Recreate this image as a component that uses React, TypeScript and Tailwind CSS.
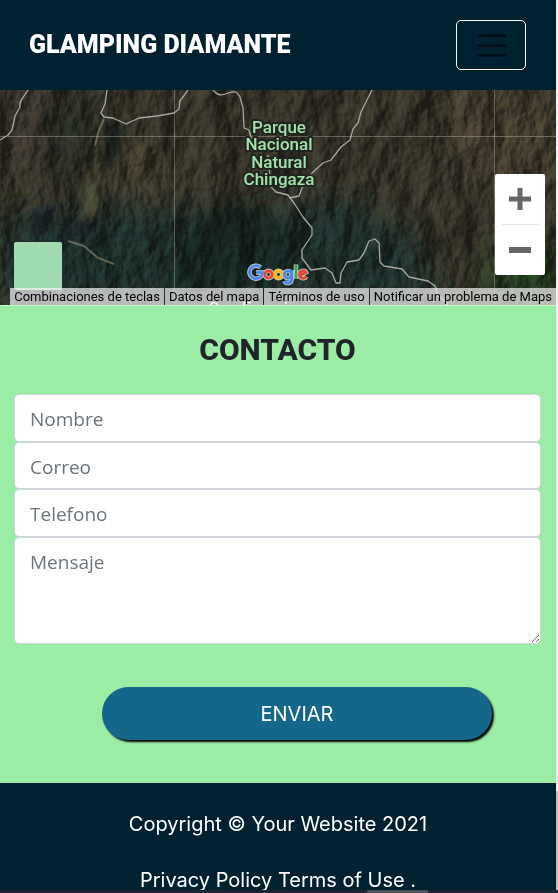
import type { ReactNode } from "react";

function SatelliteImagery() {
  return (
    <svg
      className="absolute inset-0 h-full w-full"
      viewBox="0 0 556 215"
      preserveAspectRatio="xMidYMid slice"
      aria-hidden="true"
    >
      <defs>
        <filter id="soft" x="-30%" y="-30%" width="160%" height="160%">
          <feGaussianBlur stdDeviation="14" />
        </filter>
        <filter id="edge" x="-20%" y="-20%" width="140%" height="140%">
          <feGaussianBlur stdDeviation="4" />
        </filter>
        <filter id="terrain" x="0" y="0" width="100%" height="100%" colorInterpolationFilters="sRGB">
          <feTurbulence type="fractalNoise" baseFrequency="0.03 0.02" numOctaves="5" seed="11" result="n" />
          <feDiffuseLighting in="n" surfaceScale="9" diffuseConstant="1" lightingColor="#ffffff">
            <feDistantLight azimuth="205" elevation="30" />
          </feDiffuseLighting>
        </filter>
      </defs>
      <rect width="556" height="215" fill="#333126" />
      <g filter="url(#soft)">
        <path d="M0 130 L120 115 L240 125 L340 110 L420 150 L440 215 L0 215Z" fill="#1c2e29" />
        <path d="M200 140 L270 125 L300 160 L240 215 L150 215Z" fill="#172824" />
        <path d="M430 0H556V110L470 90Z" fill="#41372a" />
        <path d="M0 0H70L40 70L0 90Z" fill="#38332a" />
        <path d="M120 40L165 60L160 110L125 100Z" fill="#403b2a" />
        <path d="M40 20L100 0L90 60L50 100Z" fill="#282a22" />
        <path d="M500 150L556 160V215H480Z" fill="#213a1f" />
      </g>
      <g filter="url(#edge)">
        <path d="M92 55L100 45L98 130L84 128Z" fill="#40402e" />
        <path d="M105 30L128 38L112 80L100 75Z" fill="#1f241e" />
        <path d="M30 125L55 112L50 140L36 148Z" fill="#191d24" />
        <path d="M75 135L92 124L86 142L74 148Z" fill="#151b20" />
        <path d="M205 135L225 115L265 120L275 150L240 160L190 160Z" fill="#16241f" />
      </g>
      <rect width="556" height="215" filter="url(#terrain)" className="opacity-45 mix-blend-overlay" />
      <g fill="none" stroke="#8e8b73" strokeWidth="2" opacity=".6">
        <path d="M104 29L99 40L95 56" />
        <path d="M68 151L84 156L98 168L114 174" />
      </g>
      <g stroke="#b4b4a8" strokeOpacity=".42">
        <path d="M0 46.500H556M174.500 0V215M494.500 0V215" />
      </g>
      <g fill="none" stroke="#a8a7a4" strokeWidth="1.300" strokeLinejoin="round">
        <path d="M28 0C24 7 19 10 20 17L15 26L12 40L8 45L0 50" />
        <path d="M107 0L105 14L101 23L104 27L113 28L126 34L139 28L157 26L174 23L179 19L180 11L188 0" />
        <path d="M213 0C219 7 223 5 228 3C235 1 237 1 240 7L243 18L244 38L249 40L252 51" />
        <path d="M372 0L367 10L361 22L358 33L353 39L350 50L341 57L331 70L323 73L312 83L302 98L299 106L289 108" />
        <path d="M268 65L271 97L276 102L288 105L294 113L303 127L312 138L312 145L302 160L302 168L311 180L325 178L332 183L336 193L340 193L341 183L347 172L359 170L364 163L369 151L375 149L379 153L380 172L384 176L402 179L409 187L428 191L435 196L438 205L448 215" />
      </g>
      <g
        fill="#a3e2a9"
        stroke="#20251f"
        strokeWidth="4"
        paintOrder="stroke"
        strokeLinejoin="round"
        textAnchor="middle"
        className="font-[Roboto,sans-serif] text-[17px] font-medium"
      >
        <text x="279" y="43">Parque</text>
        <text x="279" y="60">Nacional</text>
        <text x="279" y="78">Natural</text>
        <text x="279" y="95">Chingaza</text>
      </g>
      <text x="209" y="224" fill="#ffffff" className="font-[Roboto,sans-serif] text-[17px]">
        San Francisco
      </text>
    </svg>
  );
}

function GoogleLogo() {
  return (
    <svg
      viewBox="0 0 66 26"
      className="absolute bottom-[18px] left-1/2 h-[26px] w-[66px] -translate-x-1/2"
      role="img"
      aria-label="Google"
    >
      {["halo", "color"].map((layer) => (
        <g
          key={layer}
          fill="none"
          strokeWidth={layer === "halo" ? 4.5 : 2.7}
          stroke="#c9c9c4"
          className={layer === "halo" ? "" : "[&>.b]:stroke-[#4285f4] [&>.g]:stroke-[#34a853] [&>.r]:stroke-[#ea4335] [&>.y]:stroke-[#fbbc05]"}
        >
          <path className="b" d="M15.500 6.500A6.500 6.500 0 1 0 17.500 11.500H11" />
          <circle className="r" cx="23.500" cy="13.500" r="3.700" />
          <circle className="y" cx="33.500" cy="13.500" r="3.700" />
          <circle className="b" cx="43" cy="13.500" r="3.600" />
          <path className="b" d="M46.700 9V18C46.700 23 40.500 23 39.500 20" />
          <path className="g" d="M51 3.500V18" />
          <path className="r" d="M54.500 14.500L61 11.500C59.500 8.500 54.500 9.500 54.500 13.500C54.500 17.500 59.500 18.500 61.300 15.500" />
        </g>
      ))}
    </svg>
  );
}

function Credit({ children }: { children: ReactNode }) {
  return (
    <button type="button" className="h-[17px] bg-[#f5f5f5]/70 px-1 whitespace-nowrap text-black">
      {children}
    </button>
  );
}

function MapPanel() {
  return (
    <section aria-label="Mapa" className="relative h-[215px] overflow-hidden bg-[#302f25] font-[Roboto,sans-serif]">
      <SatelliteImagery />
      <GoogleLogo />
      <button
        type="button"
        aria-label="Cambiar vista del mapa"
        className="absolute bottom-[15px] left-[14px] h-12 w-12 rounded-xs bg-[#a0dab0] shadow-[0_0_0_1px_#20282a]"
      />
      <div className="absolute right-[11px] bottom-[30px] flex w-[50px] flex-col items-center rounded-xs bg-white">
        <button type="button" aria-label="Acercar" className="grid h-[50px] w-full place-items-center">
          <svg width="22" height="22" viewBox="0 0 22 22" fill="#666666">
            <path d="M8.500 0h5v8.500H22v5h-8.500V22h-5v-8.500H0v-5h8.500z" />
          </svg>
        </button>
        <div className="h-px w-[37px] bg-[#e6e6e6]" />
        <button type="button" aria-label="Alejar" className="grid h-[50px] w-full place-items-center">
          <svg width="22" height="6" viewBox="0 0 22 6" fill="#666666">
            <path d="M0 0h22v6H0z" />
          </svg>
        </button>
      </div>
      <div className="absolute right-0 bottom-0 flex gap-px text-[13px] leading-[17px]">
        <Credit>Combinaciones de teclas</Credit>
        <Credit>Datos del mapa</Credit>
        <Credit>Términos de uso</Credit>
        <Credit>Notificar un problema de Maps</Credit>
      </div>
    </section>
  );
}

const fieldClass =
  "block w-full rounded-[5px] border border-[#ced4da] bg-white px-[15px] text-[19px] leading-7 text-[#212529] placeholder:text-[#6c757d] placeholder:opacity-100";

function ContactForm() {
  return (
    <section className="border-t border-[#c9f5c0] bg-[#9beda6] pt-[23px] pr-[15px] pb-[43px] pl-[14px]">
      <h2 className="text-center font-[Roboto,sans-serif] text-[30px] leading-[42px] font-extrabold text-[#212529]">
        CONTACTO
      </h2>
      <form className="mt-[23px] font-['Open_Sans',sans-serif]" onSubmit={(e) => e.preventDefault()}>
        <input aria-label="Nombre" placeholder="Nombre" className={`${fieldClass} h-12 pt-[2px]`} />
        <input aria-label="Correo" type="email" placeholder="Correo" className={`${fieldClass} h-[47px] pt-[2px]`} />
        <input aria-label="Telefono" type="tel" placeholder="Telefono" className={`${fieldClass} h-12 pt-[2px]`} />
        <textarea aria-label="Mensaje" placeholder="Mensaje" className={`${fieldClass} h-[107px] resize py-[10px]`} />
        <button
          type="submit"
          className="mt-[43px] ml-[88px] block h-[53px] w-[74%] rounded-[27px] bg-[#14678b] font-[Inter,sans-serif] text-[20px] text-white shadow-[2px_2px_2px_#000]"
        >
          ENVIAR
        </button>
      </form>
    </section>
  );
}

export default function App() {
  return (
    <div className="flex h-screen flex-col overflow-hidden bg-[#002130]">
      <div className="flex min-h-0 flex-1 overflow-hidden">
        <main className="min-w-0 flex-1">
          <header className="flex h-[90px] items-center justify-between bg-[#002130] pr-[30px] pl-[29px]">
            <a href="#" className="font-[Roboto,sans-serif] text-[25px] font-black text-white">
              GLAMPING DIAMANTE
            </a>
            <button
              type="button"
              aria-label="Abrir menú"
              className="grid h-[50px] w-[70px] place-items-center rounded-[5px] border border-white"
            >
              <svg width="30" height="24" viewBox="0 0 30 24" stroke="#000f17" strokeWidth="2.500" strokeLinecap="round">
                <path d="M2.500 2.500H29M2.500 12.500H29M2.500 22.500H29" />
              </svg>
            </button>
          </header>
          <MapPanel />
          <ContactForm />
          <footer className="bg-[#002130] pt-[26px] text-center font-[Inter,sans-serif] text-[20px] leading-[30px] text-white">
            <p>Copyright © Your Website 2021</p>
            <p className="mt-[26px]">
              <a href="#">Privacy Policy</a> <a href="#">Terms of Use</a> .
            </p>
          </footer>
        </main>
        <div className="flex w-[2px] flex-col justify-end bg-[#f1f1f1]" aria-hidden="true">
          <div className="h-[99px] bg-[#c1c1c1]" />
        </div>
      </div>
      <div className="flex h-[3px] justify-center bg-[#1c2733]" aria-hidden="true">
        <div className="w-[61px] translate-x-[118px] bg-[#49525b]" />
      </div>
    </div>
  );
}
